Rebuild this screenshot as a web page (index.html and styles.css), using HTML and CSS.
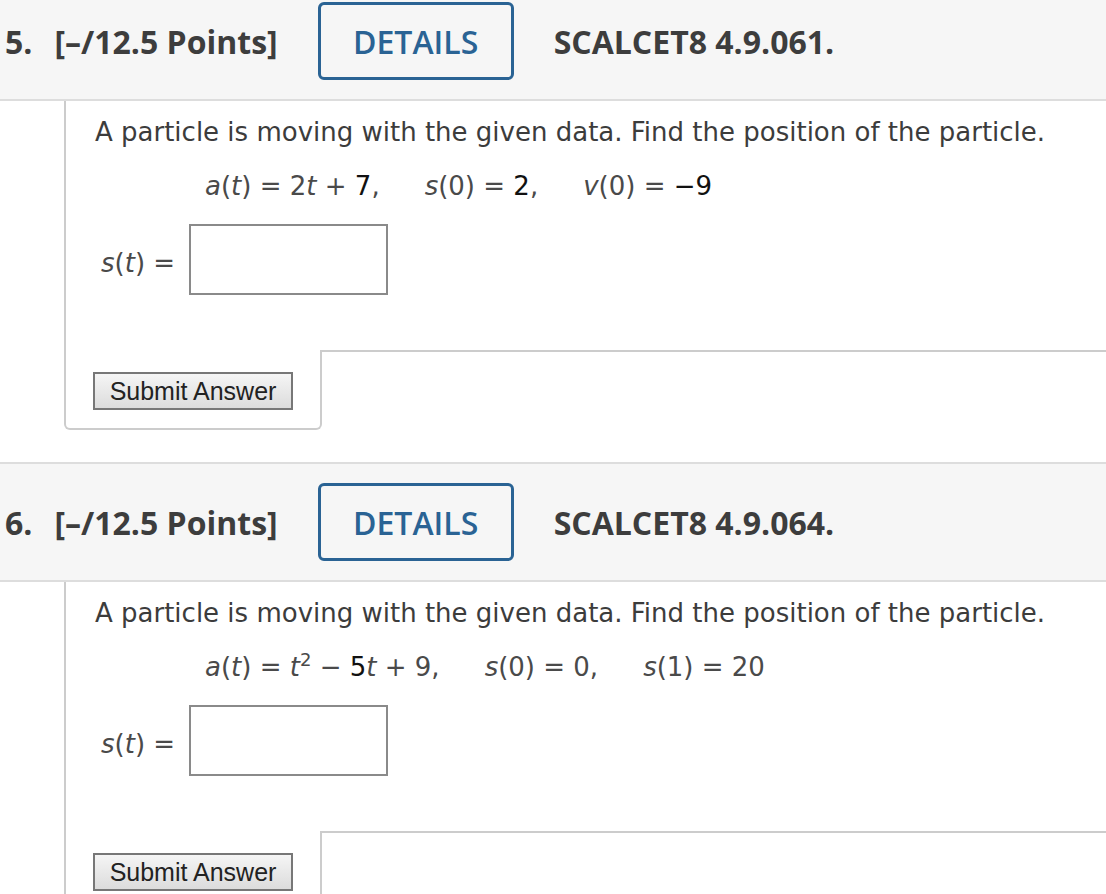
FILE: index.html
```html
<!DOCTYPE html>
<html lang="en">
<head>
<meta charset="utf-8">
<title>Questions</title>
<link rel="stylesheet" href="styles.css">
</head>
<body>
<div class="page">
  <section class="q">
    <header class="q-head">
      <span class="q-num">5.</span>
      <span class="q-pts">[–/12.5 Points]</span>
      <button class="details">DETAILS</button>
      <span class="q-ref">SCALCET8 4.9.061.</span>
    </header>
    <div class="q-body">
      <div class="q-content">
        <p class="prompt">A particle is moving with the given data. Find the position of the particle.</p>
        <p class="eq"><span class="term"><i>a</i>(<i>t</i>) = 2<i>t</i> + <b>7</b>,</span><span class="term"><i>s</i>(0) = <b>2</b>,</span><span class="term"><i>v</i>(0) = <b>−9</b></span></p>
        <div class="answer-row">
          <span class="ans-label"><i>s</i>(<i>t</i>) =</span>
          <input class="ans-input" type="text">
        </div>
      </div>
      <div class="q-foot">
        <div class="submit-cell"><button class="submit">Submit Answer</button></div>
        <div class="extra-cell"></div>
      </div>
    </div>
  </section>

  <section class="q">
    <header class="q-head">
      <span class="q-num">6.</span>
      <span class="q-pts">[–/12.5 Points]</span>
      <button class="details">DETAILS</button>
      <span class="q-ref">SCALCET8 4.9.064.</span>
    </header>
    <div class="q-body">
      <div class="q-content">
        <p class="prompt">A particle is moving with the given data. Find the position of the particle.</p>
        <p class="eq"><span class="term"><i>a</i>(<i>t</i>) = <i>t</i><sup>2</sup> − <b>5</b><i>t</i> + 9,</span><span class="term"><i>s</i>(0) = 0,</span><span class="term"><i>s</i>(1) = 20</span></p>
        <div class="answer-row">
          <span class="ans-label"><i>s</i>(<i>t</i>) =</span>
          <input class="ans-input" type="text">
        </div>
      </div>
      <div class="q-foot">
        <div class="submit-cell"><button class="submit">Submit Answer</button></div>
        <div class="extra-cell"></div>
      </div>
    </div>
  </section>
</div>
</body>
</html>
```

FILE: styles.css
```css
html, body {
  margin: 0;
  padding: 0;
  background: #ffffff;
}

body {
  font-family: "DejaVu Sans", Verdana, sans-serif;
  color: #3c3c3c;
  overflow: hidden;
}

.page {
  margin-top: -19px;
}

.q {
  margin-bottom: 32px;
}

.q-head {
  display: flex;
  align-items: center;
  background: #f6f6f6;
  border-top: 2px solid #dddddd;
  border-bottom: 2px solid #dddddd;
  padding: 19px 0 19px 5px;
  font-family: "Open Sans", sans-serif;
  font-weight: 700;
  font-size: 32px;
  color: #3d3d3d;
}

.q-num {
  margin-right: 22px;
}

.q-pts {
  margin-right: 40px;
}

.details {
  box-sizing: border-box;
  width: 196px;
  height: 78px;
  border: 3px solid #2a6394;
  border-radius: 6px;
  background: #f6f6f6;
  color: #2a6394;
  font-family: "Open Sans", sans-serif;
  font-weight: 600;
  font-size: 32px;
  padding: 0;
  margin-right: 40px;
}

.q-body {
  margin-left: 64px;
}

.q-content {
  border-left: 2px solid #cccccc;
  padding: 14px 0 55px 29px;
}

.prompt {
  margin: 0;
  font-size: 26px;
  line-height: 34px;
}

.eq {
  margin: 20px 0 0 110px;
  font-size: 26px;
  line-height: 34px;
  color: #4a4a4a;
}

.eq i {
  font-style: italic;
}

.eq b {
  font-weight: normal;
  color: #111111;
}

.term {
  margin-right: 45px;
}

.eq sup {
  font-size: 18px;
  line-height: 0;
}

.answer-row {
  display: flex;
  align-items: center;
  margin-top: 21px;
  padding-left: 6px;
}

.ans-label {
  font-size: 26px;
  color: #4a4a4a;
  margin-right: 14px;
  padding-top: 6px;
}

.ans-input {
  box-sizing: border-box;
  width: 199px;
  height: 71px;
  border: 2px solid #8a8a8a;
  background: #ffffff;
  margin: 0;
}

.q-foot {
  display: flex;
  align-items: stretch;
}

.submit-cell {
  box-sizing: border-box;
  width: 258px;
  border-left: 2px solid #cccccc;
  border-right: 2px solid #cccccc;
  border-bottom: 2px solid #cccccc;
  border-radius: 0 0 6px 6px;
  padding: 22px 0 18px 27px;
}

.extra-cell {
  flex: 1;
  border-top: 2px solid #cccccc;
}

.submit {
  display: block;
  box-sizing: border-box;
  width: 200px;
  height: 38px;
  border: 2px solid #777777;
  border-radius: 0;
  background: linear-gradient(#f5f5f5, #dcdcdc);
  font-family: "Liberation Sans", Arial, sans-serif;
  font-size: 25px;
  line-height: 34px;
  color: #222222;
  padding: 0;
}
```
